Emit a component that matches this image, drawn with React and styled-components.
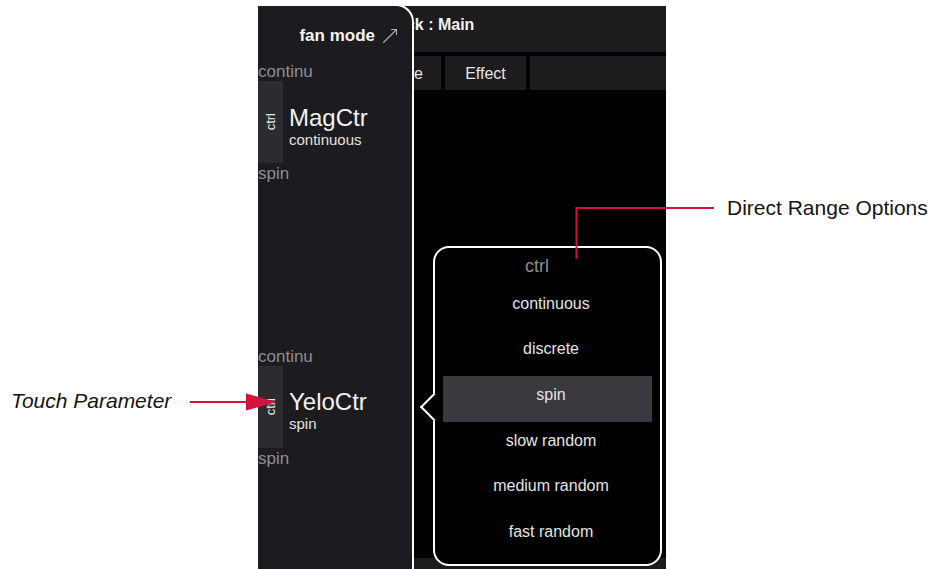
import React from 'react';
import styled, { createGlobalStyle } from 'styled-components';

const Global = createGlobalStyle`
  html, body { margin: 0; padding: 0; background: #fff; }
  body { font-family: "Liberation Sans", Arial, Helvetica, sans-serif; }
  * { box-sizing: border-box; }
`;

const Figure = styled.div`
  position: relative;
  width: 934px;
  height: 569px;
  overflow: hidden;
  padding: 6px 0 0 258px;
`;

const Screen = styled.div`
  position: relative;
  width: 408px;
  height: 563px;
  background: #000;
  overflow: hidden;
  display: flex;
  flex-direction: column;
`;

const Header = styled.div`
  height: 46px;
  flex: none;
  background: #1c1b1e;
  padding: 9px 0 0 123px;
  color: #f2f2f2;
  font-weight: bold;
  font-size: 16px;
  line-height: 19px;
  white-space: nowrap;
`;

const Tabs = styled.div`
  margin-top: 4px;
  height: 34px;
  flex: none;
  display: flex;
  gap: 4px;
`;

const Tab = styled.div`
  width: ${p => (p.$w ? `${p.$w}px` : 'auto')};
  flex: ${p => (p.$w ? 'none' : '1')};
  background: #1c1b1e;
  color: #e6e6e6;
  font-size: 16px;
  display: flex;
  align-items: center;
  justify-content: ${p => (p.$end ? 'flex-end' : 'center')};
  padding: 1px ${p => (p.$end ? '18px' : '0')} 0 0;
  white-space: nowrap;
  overflow: hidden;
`;

const Body = styled.div`
  flex: 1;
  background: #000;
`;

const BottomBar = styled.div`
  height: 11px;
  flex: none;
  background: #1c1b1e;
`;

const Sidebar = styled.div`
  position: absolute;
  left: 0;
  top: -2px;
  bottom: -20px;
  width: 156px;
  background: #1c1b1f;
  border-top: 2px solid #fff;
  border-right: 2px solid #fff;
  border-top-right-radius: 18px;
  display: flex;
  flex-direction: column;
`;

const TitleRow = styled.div`
  display: flex;
  align-items: center;
  justify-content: flex-end;
  gap: 7px;
  padding: 17px 14px 0 0;
  height: 43px;
  flex: none;
`;

const Title = styled.span`
  color: #f4f4f4;
  font-weight: bold;
  font-size: 17px;
  line-height: 20px;
`;

const Group = styled.div`
  display: flex;
  flex-direction: column;
  margin-top: ${p => p.$mt}px;
  flex: none;
`;

const RangeLabel = styled.div`
  color: #8e8e93;
  font-size: 17px;
  line-height: 18px;
  margin-top: ${p => p.$mt || 0}px;
  white-space: nowrap;
`;

const ParamRow = styled.div`
  display: flex;
  gap: 6px;
  height: 82px;
`;

const CtrlTab = styled.div`
  width: 25px;
  background: #2c2b2f;
  display: flex;
  align-items: center;
  justify-content: center;
`;

const CtrlText = styled.span`
  writing-mode: vertical-rl;
  transform: rotate(180deg);
  color: #e8e8e8;
  font-size: 13px;
  line-height: 14px;
`;

const NameBlock = styled.div`
  margin-top: ${p => p.$mt}px;
  display: flex;
  flex-direction: column;
`;

const Name = styled.span`
  color: #f2f2f2;
  font-size: 24px;
  line-height: 26px;
`;

const Sub = styled.span`
  color: #e2e2e2;
  font-size: 15px;
  line-height: 17px;
`;

const Popover = styled.div`
  position: absolute;
  left: 175px;
  top: 240px;
  width: 229px;
  height: 320px;
  background: #000;
  border: 2px solid #fff;
  border-radius: 16px;
  display: flex;
  flex-direction: column;
`;

const Pointer = styled.div`
  position: absolute;
  left: -11px;
  top: 149px;
  width: 20px;
  height: 20px;
  background: #000;
  border-left: 2px solid #fff;
  border-bottom: 2px solid #fff;
  transform: rotate(45deg);
`;

const PopTitle = styled.div`
  height: 37px;
  display: flex;
  align-items: center;
  justify-content: center;
  padding-right: 21px;
  color: #8e8e93;
  font-size: 18px;
`;

const OptionList = styled.div`
  position: relative;
  z-index: 1;
  display: flex;
  flex-direction: column;
  padding: 0 8px;
`;

const Option = styled.div`
  height: 45.6px;
  display: flex;
  align-items: center;
  justify-content: center;
  padding: 0 0 8px 7px;
  background: ${p => (p.$selected ? '#3a393d' : 'transparent')};
  color: #e4e4e4;
  font-size: 16px;
  white-space: nowrap;
`;

const Callouts = styled.svg`
  position: absolute;
  left: 0;
  top: 0;
  pointer-events: none;
`;

const Annotation = styled.div`
  position: absolute;
  left: ${p => p.$x}px;
  top: ${p => p.$y}px;
  font-size: 21px;
  line-height: 24px;
  color: #141414;
  font-style: ${p => (p.$italic ? 'italic' : 'normal')};
  white-space: nowrap;
`;

const ArrowIcon = () => (
  <svg width="16" height="16" viewBox="0 0 16 16" fill="none" stroke="#b4b4b4" strokeWidth="1.1" strokeLinecap="round">
    <path d="M1.5 14.5 L14.5 1.5" />
    <path d="M9.5 1.5 H14.5 V6.5" />
  </svg>
);

const options = ['continuous', 'discrete', 'spin', 'slow random', 'medium random', 'fast random'];

const ParamGroup = ({ mt, nameMt, top, bottom, name, value }) => (
  <Group $mt={mt}>
    <RangeLabel>{top}</RangeLabel>
    <ParamRow>
      <CtrlTab><CtrlText>ctrl</CtrlText></CtrlTab>
      <NameBlock $mt={nameMt}>
        <Name>{name}</Name>
        <Sub>{value}</Sub>
      </NameBlock>
    </ParamRow>
    <RangeLabel $mt={2}>{bottom}</RangeLabel>
  </Group>
);

export default function App() {
  return (
    <>
      <Global />
      <Figure>
        <Screen>
          <Header>Stack : Main</Header>
          <Tabs>
            <Tab $w={183} $end>Sequence</Tab>
            <Tab $w={81}>Effect</Tab>
            <Tab />
          </Tabs>
          <Body />
          <BottomBar />

          <Sidebar>
            <TitleRow>
              <Title>fan mode</Title>
              <ArrowIcon />
            </TitleRow>
            <ParamGroup mt={14} nameMt={24} top="continu" bottom="spin" name="MagCtr" value="continuous" />
            <ParamGroup mt={165} nameMt={23} top="continu" bottom="spin" name="YeloCtr" value="spin" />
          </Sidebar>

          <Popover>
            <Pointer />
            <PopTitle>ctrl</PopTitle>
            <OptionList>
              {options.map(o => (
                <Option key={o} $selected={o === 'spin'}>{o}</Option>
              ))}
            </OptionList>
          </Popover>
        </Screen>

        <Callouts width="934" height="569" viewBox="0 0 934 569">
          <path d="M576.5 259 V208 H714" fill="none" stroke="#d0143e" strokeWidth="2" />
          <path d="M190 402 H250" stroke="#d0143e" strokeWidth="2" />
          <polygon points="246,393.5 277,402 246,410.5" fill="#d0143e" />
        </Callouts>
        <Annotation $x={727} $y={196}>Direct Range Options</Annotation>
        <Annotation $x={11} $y={389} $italic>Touch Parameter</Annotation>
      </Figure>
    </>
  );
}
